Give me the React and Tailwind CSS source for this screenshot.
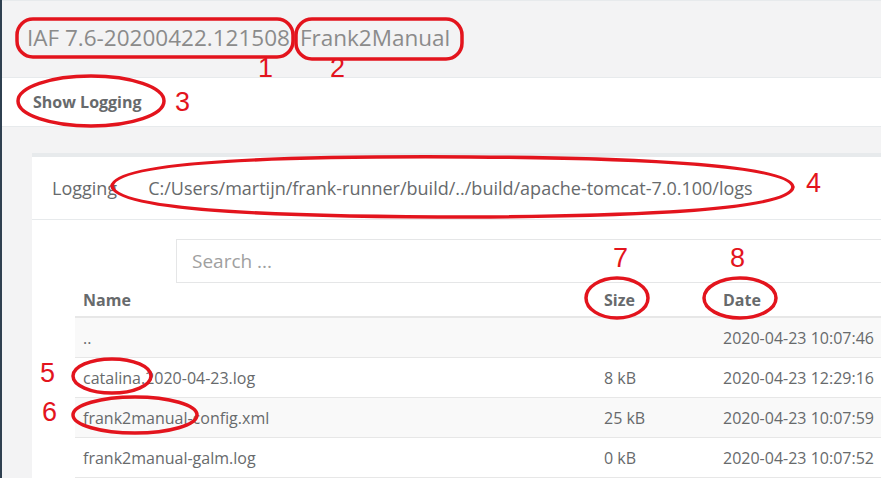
const rows = [
  { name: "..", size: "", date: "2020-04-23 10:07:46" },
  { name: "catalina.2020-04-23.log", size: "8 kB", date: "2020-04-23 12:29:16" },
  { name: "frank2manual-config.xml", size: "25 kB", date: "2020-04-23 10:07:59" },
  { name: "frank2manual-galm.log", size: "0 kB", date: "2020-04-23 10:07:52" },
];

function Marks() {
  // red annotation ellipses and numbers drawn over the screenshot
  const nums = [
    { n: "1", x: 258, y: 55 },
    { n: "2", x: 330, y: 55 },
    { n: "3", x: 175, y: 89 },
    { n: "4", x: 806, y: 170 },
    { n: "5", x: 40, y: 360 },
    { n: "6", x: 42, y: 399 },
    { n: "7", x: 613, y: 245 },
    { n: "8", x: 730, y: 245 },
  ];
  return (
    <div className="absolute inset-0 pointer-events-none">
      <svg width="881" height="478" className="absolute inset-0" fill="none" stroke="#e3141d" strokeWidth="3.5">
        <rect x="17" y="19" width="276" height="38" rx="16" />
        <rect x="296" y="19" width="166" height="40" rx="16" />
        <ellipse cx="91" cy="101" rx="73" ry="25" />
        <path d="M112 186 C 116 160, 300 156, 470 157 C 640 158, 790 165, 793 187 C 790 210, 640 216, 470 217 C 300 217, 116 212, 112 186 Z" />
        <ellipse cx="112" cy="376" rx="39" ry="17" />
        <ellipse cx="135" cy="415" rx="62" ry="18" />
        <ellipse cx="617" cy="298" rx="31" ry="20" />
        <ellipse cx="740" cy="298" rx="36" ry="20" />
      </svg>
      {nums.map((m) => (
        <span
          key={m.n}
          className="absolute text-[27px] leading-none text-[#e3141d] font-['Liberation_Sans',sans-serif]"
          style={{ left: m.x, top: m.y }}
        >
          {m.n}
        </span>
      ))}
    </div>
  );
}

export default function App() {
  return (
    <div className="relative w-[881px] h-[478px] overflow-hidden flex bg-[#f3f3f4] font-['Open_Sans',sans-serif] text-[#676a6c]">
      <div className="w-[2px] shrink-0 bg-[#2f4050]"></div>
      <div className="flex-1 flex flex-col">
        <div className="h-[77px] shrink-0 flex items-center pl-[25px] pb-[2px] border-t border-[#e7eaec] text-[22.5px] text-[#8b8b8b] gap-[10px]">
          <span>IAF 7.6-20200422.121508</span>
          <span>Frank2Manual</span>
        </div>
        <div className="h-[50px] shrink-0 bg-white border-y border-[#e7eaec] flex items-center pl-[31px]">
          <span className="text-[16px] font-bold">Show Logging</span>
        </div>
        <div className="flex-1 pt-[26px] pl-[30px]">
          <div className="bg-white border-t-4 border-[#e7eaec] h-full">
            <div className="h-[63px] flex items-center pl-[20px] border-b border-[#e7eaec] text-[18px]">
              <span>Logging</span>
              <span className="ml-[31px]">C:/Users/martijn/frank-runner/build/../build/apache-tomcat-7.0.100/logs</span>
            </div>
            <div className="pt-[19px] pl-[43px]">
              <div className="ml-[101px] h-[44px] border border-[#e5e6e7] border-r-0 flex items-center pl-[15px] text-[19px] text-[#a0a0a0]">
                Search ...
              </div>
              <div className="h-[35px] flex items-center border-b-2 border-[#e7e7e7] text-[16px] font-bold">
                <span className="w-[521px] pl-[8px]">Name</span>
                <span className="w-[119px] pl-[8px]">Size</span>
                <span className="pl-[8px]">Date</span>
              </div>
              {rows.map((r, i) => (
                <div
                  key={r.date}
                  className={`h-[40px] flex items-center border-b border-[#e7e7e7] text-[16px] ${i % 2 === 0 ? "bg-[#f9f9f9]" : "bg-white"}`}
                >
                  <span className="w-[521px] pl-[8px]">{r.name}</span>
                  <span className="w-[119px] pl-[8px]">{r.size}</span>
                  <span className="pl-[8px] whitespace-nowrap">{r.date}</span>
                </div>
              ))}
            </div>
          </div>
        </div>
      </div>
      <Marks />
    </div>
  );
}
